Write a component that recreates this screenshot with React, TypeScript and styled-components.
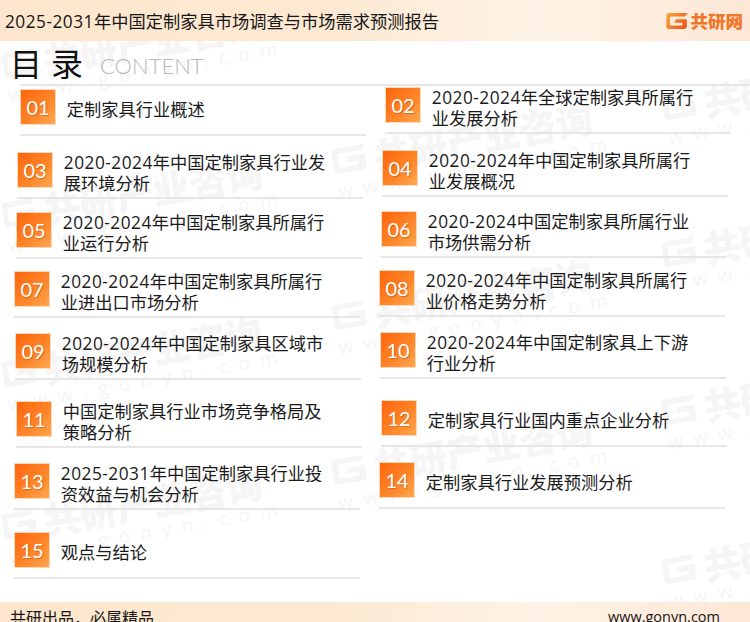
import React from "react";
import styled, { createGlobalStyle } from "styled-components";

const GlobalStyle = createGlobalStyle`
  html, body {
    margin: 0;
    padding: 0;
    background: #fff;
  }
`;

const CJK = `"Noto Sans CJK SC", "Noto Sans", sans-serif`;

const Page = styled.div`
  position: relative;
  display: flex;
  flex-direction: column;
  width: 750px;
  height: 622px;
  overflow: hidden;
  background: #fff;
  font-family: ${CJK};
  color: #222;
`;

const Band = styled.div`
  position: relative;
  z-index: 1;
  display: flex;
  justify-content: space-between;
  background: linear-gradient(
    90deg,
    #fde6cd 0%,
    #fde9d3 45%,
    #fef3e6 72%,
    #fde7d6 100%
  );
`;

const Header = styled(Band)`
  align-items: center;
  height: 41px;
  padding: 0 7px 0 5px;
  box-sizing: border-box;
`;

const ReportTitle = styled.div`
  font-size: 17.25px;
  line-height: 41px;
  color: #161616;
  white-space: nowrap;
`;

const Num = styled.span<{ $spacing: number }>`
  font-family: "Open Sans", sans-serif;
  line-height: 0;
  letter-spacing: ${({ $spacing }) => $spacing}px;
`;

const Logo = styled.div`
  display: flex;
  align-items: center;
  gap: 3px;
`;

const LogoText = styled.span`
  font-size: 17.5px;
  font-weight: 900;
  line-height: 20px;
  color: #f0762a;
`;

const Footer = styled(Band)`
  height: 20px;
  padding: 0 30px 0 10px;
  overflow: hidden;
  font-size: 16px;
  line-height: 30px;
  color: #161616;
`;

const FooterUrl = styled.span`
  font-family: "Open Sans", sans-serif;
  font-size: 14.5px;
`;

const Body = styled.div`
  position: relative;
  z-index: 0;
  flex: 1;
  min-height: 0;
`;

const TitleRow = styled.div`
  position: relative;
  display: flex;
  align-items: center;
  height: 43px;
  padding-left: 10px;
  box-sizing: border-box;
`;

const MainTitle = styled.h1`
  margin: 0;
  font-size: 32px;
  font-weight: 400;
  letter-spacing: 9px;
  line-height: 43px;
  color: #111;
`;

const SubTitle = styled.span`
  margin: 5px 0 0 8px;
  font-family: Lato, sans-serif;
  font-size: 22px;
  font-weight: 300;
  color: #b8b8b8;
`;

const TopRule = styled.div`
  position: relative;
  height: 2px;
  margin-left: 20px;
  background: #e6e6e6;
`;

const Columns = styled.div`
  position: relative;
  display: grid;
  grid-template-columns: 375px 375px;
`;

const Column = styled.div`
  display: flex;
  flex-direction: column;
`;

const Item = styled.div<{ $x: number; $gap: number }>`
  display: flex;
  align-items: flex-start;
  gap: 10.8px;
  width: 346px;
  height: 47px;
  box-sizing: border-box;
  margin-left: ${({ $x }) => $x}px;
  margin-top: ${({ $gap }) => $gap}px;
  border-bottom: 2px solid #e6e6e6;
`;

const Badge = styled.div`
  flex: none;
  display: flex;
  align-items: center;
  justify-content: center;
  width: 36px;
  height: 36px;
  box-sizing: border-box;
  border: 1px solid #ffd8b8;
  background: linear-gradient(135deg, #ff650c 0%, #ff8428 55%, #ffa750 100%);
  font-family: Lato, sans-serif;
  font-size: 20px;
  color: #fff;
  text-shadow: 1px 1px 1px rgba(150, 70, 0, 0.45);
`;

const ItemText = styled.div`
  display: flex;
  align-items: center;
  height: 36px;
  padding-top: 2px;
  font-size: 17.25px;
  line-height: 21.5px;
  color: #1a1a1a;
  white-space: pre-line;
`;

const WatermarkLayer = styled.div`
  position: absolute;
  inset: 0;
  overflow: hidden;
`;

const Watermark = styled.div<{ $x: number; $y: number }>`
  position: absolute;
  left: ${({ $x }) => $x}px;
  top: ${({ $y }) => $y}px;
  width: 290px;
  color: #f5f5f5;
  transform: rotate(-10deg);
  transform-origin: 0 23px;
`;

const MarkRow = styled.div`
  display: flex;
  align-items: center;
  gap: 7px;
  height: 46px;
  font-size: 37px;
  font-weight: 900;
  line-height: 46px;
  white-space: nowrap;
`;

const MarkUrl = styled.div`
  font-family: "Open Sans", sans-serif;
  font-size: 19px;
  line-height: 14px;
  letter-spacing: 10.5px;
  white-space: nowrap;
`;

const gPath =
  "M4 0H24L21 4H5Q4 4 4 5V13Q4 14 5 14H18V11H9L11 7H23V15Q23 18 20 18H3Q0 18 0 15V3Q0 0 4 0Z";

const BrandLogo = () => (
  <svg width="22" height="16" viewBox="0 0 24 18">
    <defs>
      <linearGradient id="brand-g" x1="0" y1="0" x2="1" y2="0.6">
        <stop offset="0" stopColor="#f8a83a" />
        <stop offset="1" stopColor="#ee5a20" />
      </linearGradient>
    </defs>
    <path d={gPath} fill="url(#brand-g)" />
  </svg>
);

const MarkLogo = () => (
  <svg width="34" height="26" viewBox="0 0 24 18">
    <path d={gPath} fill="currentColor" />
  </svg>
);

// splits latin digits out of the CJK run, they are set a bit wider in the slide
const withNumbers = (text: string, spacing: number) =>
  text.split(/(\d[\d-]*)/).map((part, i) =>
    i % 2 === 1 ? (
      <Num key={i} $spacing={spacing}>
        {part}
      </Num>
    ) : (
      part
    )
  );

type Entry = { no: string; x: number; gap: number; text: string };

const leftItems: Entry[] = [
  { no: "01", x: 20, gap: 3, text: "定制家具行业概述" },
  { no: "03", x: 17, gap: 16, text: "2020-2024年中国定制家具行业发\n展环境分析" },
  { no: "05", x: 16, gap: 13, text: "2020-2024年中国定制家具所属行\n业运行分析" },
  { no: "07", x: 14, gap: 12, text: "2020-2024年中国定制家具所属行\n业进出口市场分析" },
  { no: "09", x: 15, gap: 15, text: "2020-2024年中国定制家具区域市\n场规模分析" },
  { no: "11", x: 16, gap: 21, text: "中国定制家具行业市场竞争格局及\n策略分析" },
  { no: "13", x: 14, gap: 15, text: "2025-2031年中国定制家具行业投\n资效益与机会分析" },
  { no: "15", x: 14, gap: 22, text: "观点与结论" },
];

const rightItems: Entry[] = [
  { no: "02", x: 10, gap: 1, text: "2020-2024年全球定制家具所属行\n业发展分析" },
  { no: "04", x: 7, gap: 16, text: "2020-2024年中国定制家具所属行\n业发展概况" },
  { no: "06", x: 6, gap: 14, text: "2020-2024中国定制家具所属行业\n市场供需分析" },
  { no: "08", x: 4, gap: 12, text: "2020-2024年中国定制家具所属行\n业价格走势分析" },
  { no: "10", x: 5, gap: 15, text: "2020-2024年中国定制家具上下游\n行业分析" },
  { no: "12", x: 6, gap: 21, text: "定制家具行业国内重点企业分析" },
  { no: "14", x: 4, gap: 15, text: "定制家具行业发展预测分析" },
];

// where the repeated watermark sits: left edge and logo centre in page pixels
const marks = [
  [3, 66], [3, 216], [3, 375], [3, 527],
  [333, 162], [333, 318], [333, 473],
  [663, 108], [663, 255], [663, 413], [663, 572],
];

const renderItem = (item: Entry) => (
  <Item key={item.no} $x={item.x} $gap={item.gap}>
    <Badge>{item.no}</Badge>
    <ItemText>
      <span>{withNumbers(item.text, 0.5)}</span>
    </ItemText>
  </Item>
);

export default function App() {
  return (
    <Page>
      <GlobalStyle />
      <Header>
        <ReportTitle>
          {withNumbers("2025-2031年中国定制家具市场调查与市场需求预测报告", 0.5)}
        </ReportTitle>
        <Logo>
          <BrandLogo />
          <LogoText>共研网</LogoText>
        </Logo>
      </Header>
      <Body>
        <WatermarkLayer>
          {marks.map(([x, y]) => (
            <Watermark key={`${x}-${y}`} $x={x} $y={y - 64}>
              <MarkRow>
                <MarkLogo />
                共研产业咨询
              </MarkRow>
              <MarkUrl>www.gonyn.com</MarkUrl>
            </Watermark>
          ))}
        </WatermarkLayer>
        <TitleRow>
          <MainTitle>目录</MainTitle>
          <SubTitle>CONTENT</SubTitle>
        </TitleRow>
        <TopRule />
        <Columns>
          <Column>{leftItems.map(renderItem)}</Column>
          <Column>{rightItems.map(renderItem)}</Column>
        </Columns>
      </Body>
      <Footer>
        <span>共研出品，必属精品</span>
        <FooterUrl>www.gonyn.com</FooterUrl>
      </Footer>
    </Page>
  );
}
